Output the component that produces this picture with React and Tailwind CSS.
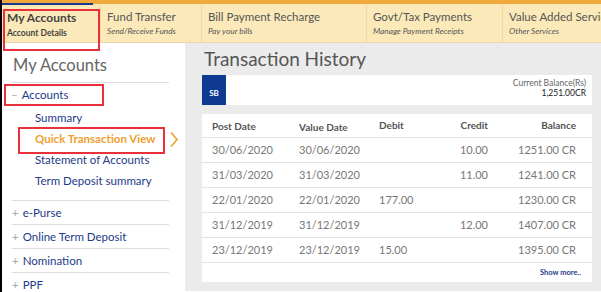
const tabs = [
  { title: 'Fund Transfer', sub: 'Send/Receive Funds', w: 'w-[101px]' },
  { title: 'Bill Payment Recharge', sub: 'Pay your bills', w: 'w-[165px]' },
  { title: 'Govt/Tax Payments', sub: 'Manage Payment Receipts', w: 'w-[136px]' },
  { title: 'Value Added Services', sub: 'Other Services', w: 'w-[120px]' },
];

const rows = [
  ['30/06/2020', '30/06/2020', '', '10.00', '1251.00 CR'],
  ['31/03/2020', '31/03/2020', '', '11.00', '1241.00 CR'],
  ['22/01/2020', '22/01/2020', '177.00', '', '1230.00 CR'],
  ['31/12/2019', '31/12/2019', '', '12.00', '1407.00 CR'],
  ['23/12/2019', '23/12/2019', '15.00', '', '1395.00 CR'],
];

const others = ['e-Purse', 'Online Term Deposit', 'Nomination', 'PPF'];

export default function App() {
  return (
    <div className="relative h-[292px] w-[601px] overflow-hidden border-l-2 border-black bg-white font-['Lato',sans-serif]">
      <div className="h-[4px] bg-[#f2a93b]" />
      <nav className="flex h-[39px] border-b border-[#e8d7a8] bg-[#fbe9b9]">
        <div className="relative w-[99px] shrink-0 border-r border-[#ecd9a6] pl-[5px] pt-[6px]">
          <div className="absolute left-0 right-[7px] top-[-1px] h-[2px] bg-[#1c3a8c]" />
          <div className="whitespace-nowrap text-[12px] font-bold leading-[16px] text-[#444]">My Accounts</div>
          <div className="whitespace-nowrap text-[8.5px] font-bold leading-[14px] text-[#444]">Account Details</div>
        </div>
        {tabs.map((t) => (
          <div key={t.title} className={`${t.w} shrink-0 border-r border-[#ecd9a6] pl-[6px] pt-[5px]`}>
            <div className="whitespace-nowrap text-[11.5px] leading-[16px] text-[#555]">{t.title}</div>
            <div className="whitespace-nowrap text-[8.3px] italic leading-[13px] text-[#555]">{t.sub}</div>
          </div>
        ))}
      </nav>
      <div className="pointer-events-none absolute left-[1px] top-[9px] h-[42px] w-[97px] border-2 border-[#e8313a]" />

      <div className="flex h-[248px]">
        <aside className="w-[183px] shrink-0 bg-white pl-[8px] pr-[16px]">
          <h2 className="pl-[3px] pt-[11px] text-[16.5px] leading-[22px] text-[#666]">My Accounts</h2>
          <div className="mt-[6px] ml-[2px] border-t border-[#ddd]" />
          <div className="ml-[-6px] mt-[1px] flex h-[22px] w-[100px] items-center whitespace-nowrap border-2 border-[#e8313a] pl-[5px] text-[11.5px] text-[#1d3a8a]">
            <span className="mr-[4px] text-[#aaa]">–</span>Accounts
          </div>
          <ul className="mt-[1px] whitespace-nowrap pl-[25px] text-[11.5px] leading-[21px] text-[#1d3a8a]">
            <li>Summary</li>
            <li className="relative mb-[-5px] ml-[-17px] mt-[-1px] flex h-[27px] w-[147px] items-center border-2 border-[#e8313a] pb-[4px] pl-[15px] text-[11.5px] font-bold text-[#f0a030]">
              Quick Transaction View
              <svg className="absolute right-[-16px] top-[2px]" width="10" height="17" viewBox="0 0 10 17" fill="none">
                <path d="M2 1.5 L8 8.5 L2 15.5" stroke="#f0a030" strokeWidth="1.6" />
              </svg>
            </li>
            <li>Statement of Accounts</li>
            <li>Term Deposit summary</li>
          </ul>
          <div className="ml-[2px] mt-[9px]">
            {others.map((o) => (
              <div key={o} className="flex h-[24px] items-center whitespace-nowrap border-t border-[#ddd] text-[11.5px] text-[#1d3a8a]">
                <span className="mr-[4px] text-[#aaa]">+</span>{o}
              </div>
            ))}
          </div>
        </aside>

        <main className="flex-1 bg-[#ebebeb] pl-[17px] pr-[9px]">
          <h1 className="pl-[2px] pt-[4px] text-[19px] leading-[24px] text-[#555]">Transaction History</h1>
          <div className="mt-[4px] flex h-[30px] bg-white">
            <div className="flex w-[24px] items-center justify-center bg-[#0e3a92] pt-[6px] text-[8px] font-bold text-white">SB</div>
            <div className="flex-1 pr-[6px] pt-[3px] text-right text-[8.5px] leading-[10px] text-[#666]">
              <div>Current Balance(Rs)</div>
              <div className="text-[#222]">1,251.00CR</div>
            </div>
          </div>
          <div className="mt-[9px] bg-white text-[11px] text-[#777]">
            <div className="grid h-[24px] grid-cols-[87px_80px_50px_59px_1fr] items-center border-b border-[#e2e2e2] pl-[10px] pr-[16px] text-[10px] font-bold text-[#555]">
              <span className="pt-[2px]">Post Date</span>
              <span className="pt-[3px]">Value Date</span>
              <span className="pb-[1px]">Debit</span>
              <span className="text-right">Credit</span>
              <span className="text-right">Balance</span>
            </div>
            {rows.map((r) => (
              <div key={r[0] + r[4]} className="grid h-[25px] grid-cols-[87px_80px_50px_59px_1fr] items-center whitespace-nowrap border-b border-[#e2e2e2] pl-[10px] pr-[16px]">
                <span>{r[0]}</span>
                <span>{r[1]}</span>
                <span>{r[2]}</span>
                <span className="text-right">{r[3]}</span>
                <span className="text-right">{r[4]}</span>
              </div>
            ))}
            <div className="flex h-[19px] items-center justify-end pr-[11px] text-[7.5px] font-bold text-[#1d3a8a]">Show more..</div>
          </div>
        </main>
      </div>
    </div>
  );
}
